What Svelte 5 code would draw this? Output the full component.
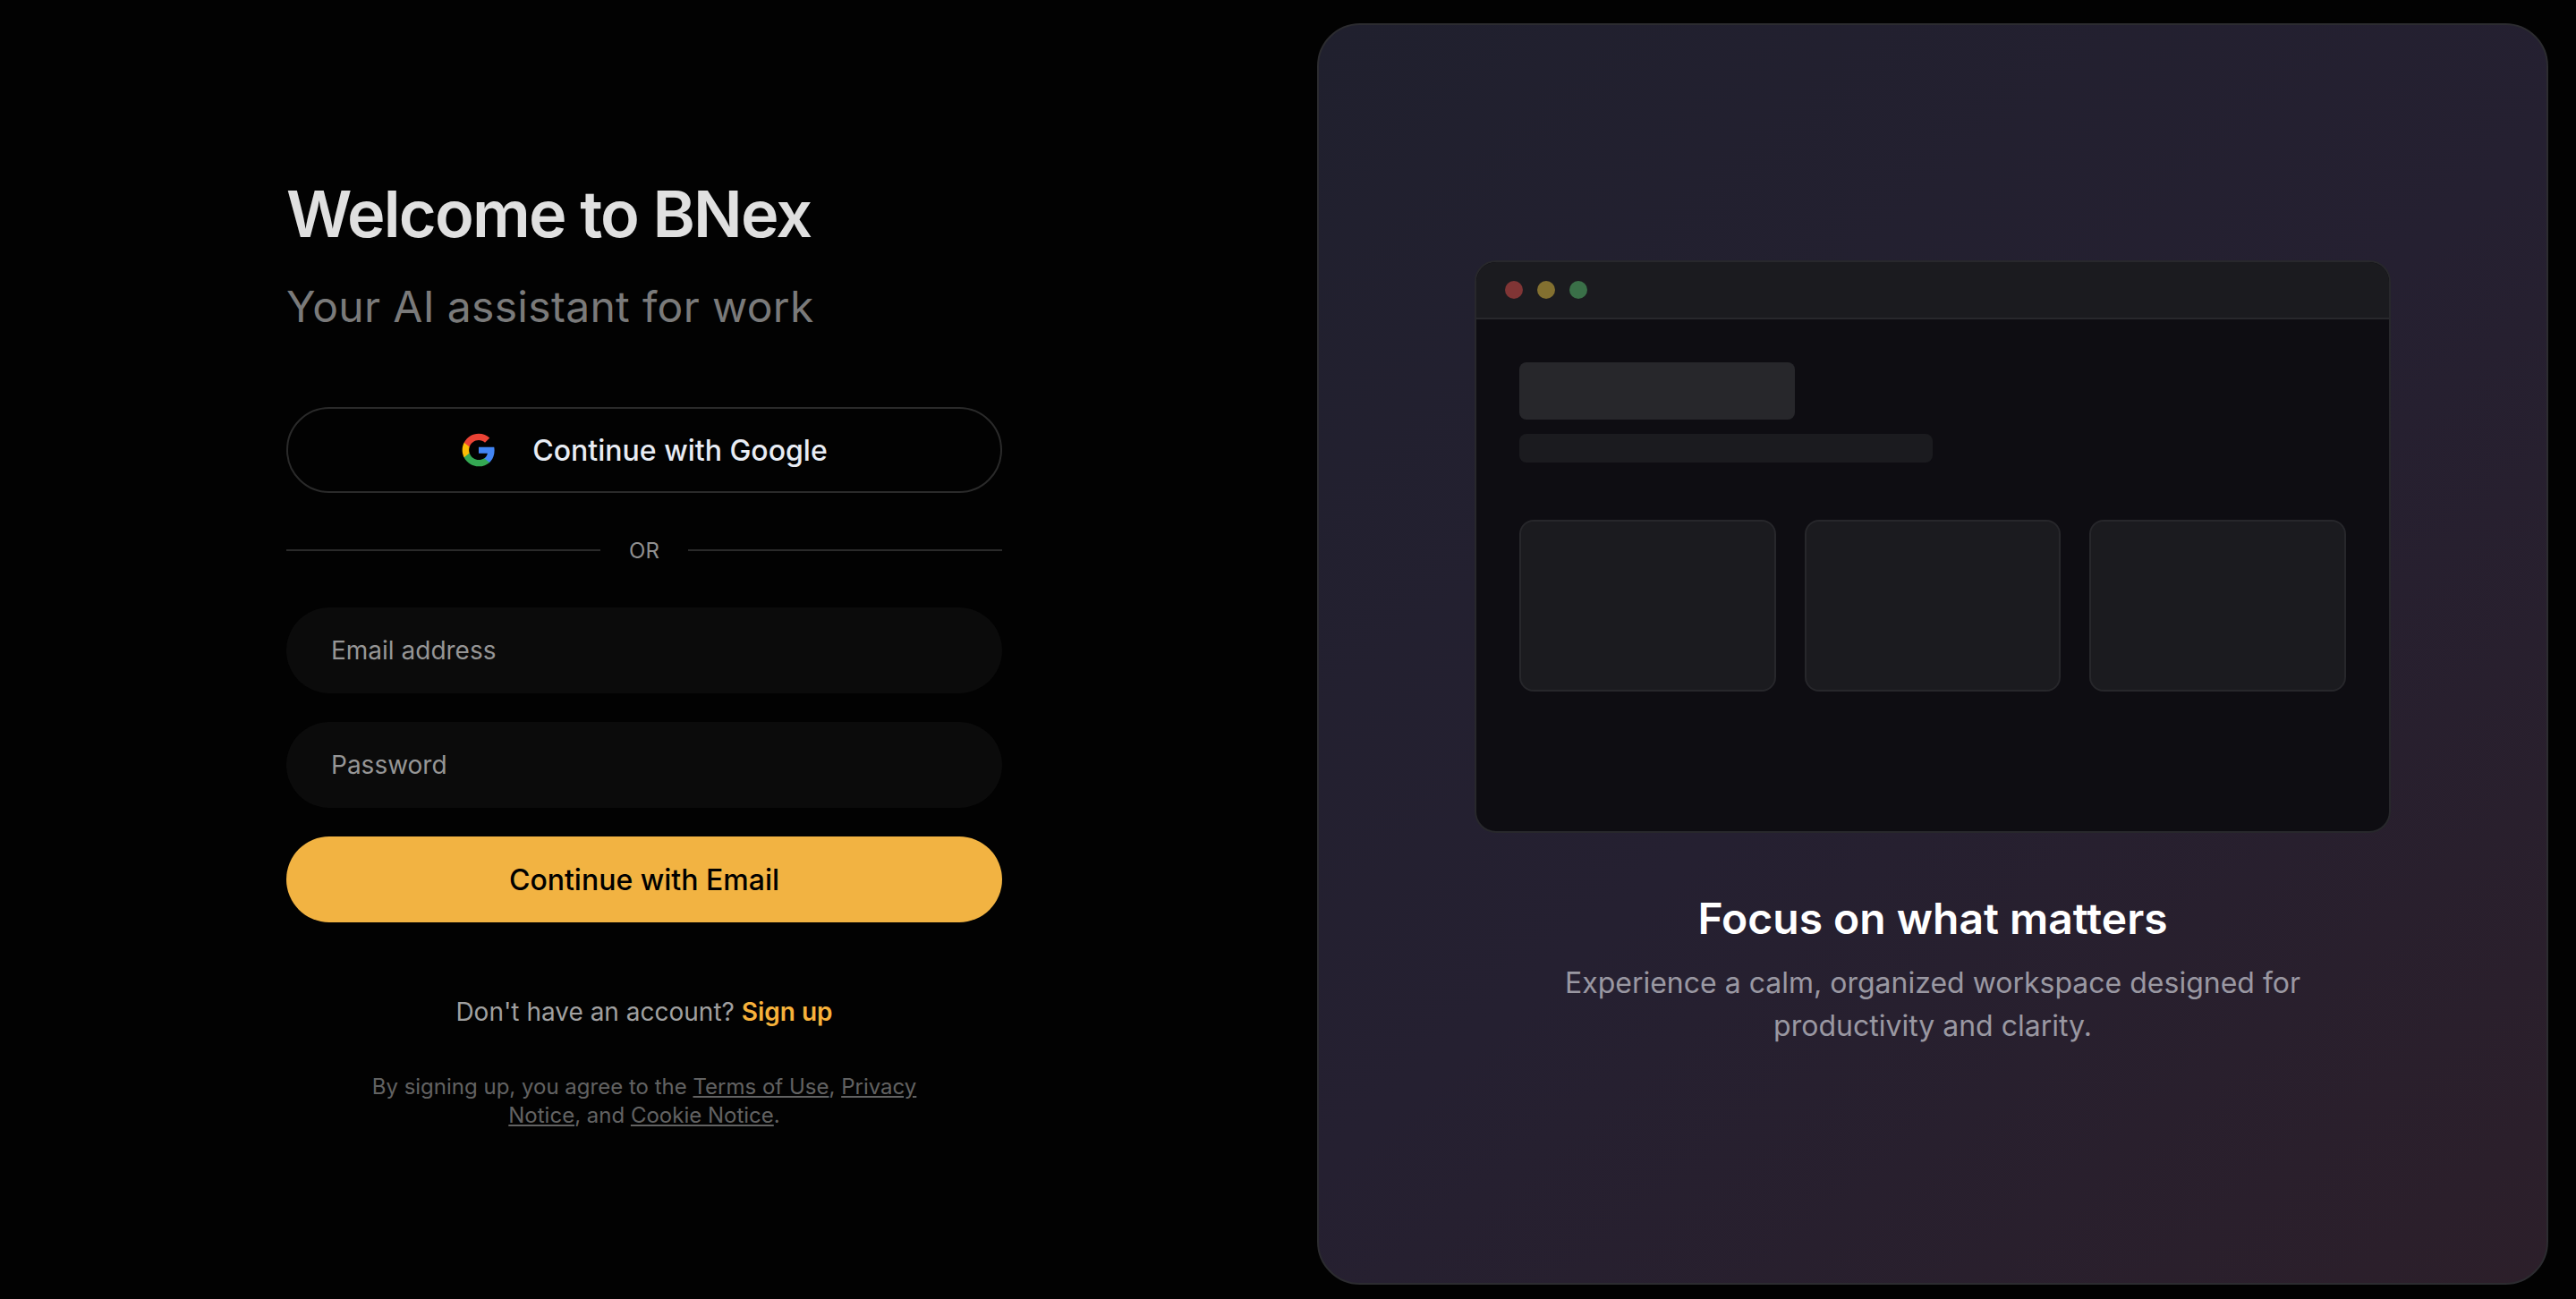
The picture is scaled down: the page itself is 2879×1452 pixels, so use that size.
<script>
  const cards = [1, 2, 3];
</script>

<div class="page">
  <main class="left">
    <div class="form">
      <h1>Welcome to BNex</h1>
      <p class="sub">Your AI assistant for work</p>
      <button class="google">
        <svg viewBox="0 0 24 24" width="40" height="40" aria-hidden="true">
          <path fill="#4285F4" d="M22.56 12.25c0-.78-.07-1.53-.2-2.25H12v4.26h5.92c-.26 1.37-1.04 2.53-2.21 3.31v2.77h3.57c2.08-1.92 3.28-4.74 3.28-8.09z"/>
          <path fill="#34A853" d="M12 23c2.97 0 5.46-.98 7.28-2.66l-3.57-2.77c-.98.66-2.23 1.06-3.71 1.06-2.86 0-5.29-1.93-6.16-4.53H2.18v2.84C3.99 20.53 7.7 23 12 23z"/>
          <path fill="#FBBC05" d="M5.84 14.09c-.22-.66-.35-1.36-.35-2.09s.13-1.43.35-2.09V7.07H2.18C1.43 8.55 1 10.22 1 12s.43 3.45 1.18 4.93l2.85-2.22.81-.62z"/>
          <path fill="#EA4335" d="M12 5.38c1.62 0 3.06.56 4.21 1.64l3.15-3.15C17.45 2.09 14.97 1 12 1 7.7 1 3.99 3.47 2.18 7.07l3.66 2.84c.87-2.6 3.3-4.53 6.16-4.53z"/>
        </svg>
        <span>Continue with Google</span>
      </button>
      <div class="or"><i></i><span>OR</span><i></i></div>
      <div class="field">Email address</div>
      <div class="field">Password</div>
      <button class="primary">Continue with Email</button>
      <p class="signup">Don't have an account? <a href="#signup">Sign up</a></p>
      <p class="legal">By signing up, you agree to the <a href="#terms">Terms of Use</a>, <a href="#privacy">Privacy Notice</a>, and <a href="#cookie">Cookie Notice</a>.</p>
    </div>
  </main>

  <aside class="panel">
    <div class="window">
      <div class="bar">
        <b class="dot red"></b><b class="dot yellow"></b><b class="dot green"></b>
      </div>
      <div class="content">
        <div class="block"></div>
        <div class="line"></div>
        <div class="cards">
          {#each cards as c (c)}
            <div class="card"></div>
          {/each}
        </div>
      </div>
    </div>
    <h2>Focus on what matters</h2>
    <p class="desc">Experience a calm, organized workspace designed for productivity and clarity.</p>
  </aside>
</div>

<style>
  :global(body) {
    margin: 0;
    background: #020202;
    font-family: Inter, "Liberation Sans", sans-serif;
  }
  .page {
    display: flex;
    height: 1452px;
    box-sizing: border-box;
    padding: 26px 31px 16px 0;
    overflow: hidden;
  }
  .left {
    flex: 0 0 1472px;
    box-sizing: border-box;
    padding: 0 352px 0 320px;
  }
  .form {
    display: flex;
    flex-direction: column;
    padding-top: 169px;
  }
  h1 {
    margin: 0;
    font-size: 72px;
    line-height: 88px;
    font-weight: 600;
    letter-spacing: -1.8px;
    color: #e0e0e0;
  }
  .sub {
    margin: 24px 0 0;
    font-size: 48px;
    line-height: 72px;
    letter-spacing: 0.32px;
    color: #7a7a7a;
  }
  button {
    font-family: inherit;
    box-sizing: border-box;
    width: 100%;
    height: 96px;
    border-radius: 48px;
    font-size: 32px;
    font-weight: 500;
    cursor: pointer;
  }
  .google {
    margin-top: 76px;
    display: flex;
    align-items: center;
    justify-content: center;
    gap: 40px;
    background: transparent;
    border: 2px solid #2a2a2a;
    color: #e8ecf4;
  }
  .or {
    display: flex;
    align-items: center;
    gap: 32px;
    margin: 48px 0;
    height: 32px;
    color: #909090;
    font-size: 24px;
  }
  .or i {
    flex: 1;
    height: 2px;
    background: #2a2a2a;
  }
  .field {
    box-sizing: border-box;
    height: 96px;
    border-radius: 48px;
    background: #0b0b0b;
    padding: 0 50px;
    display: flex;
    align-items: center;
    font-size: 28px;
    color: #969696;
    margin-bottom: 32px;
  }
  .primary {
    border: none;
    background: #f2b342;
    color: #000;
  }
  .signup {
    margin: 80px 0 0;
    text-align: center;
    font-size: 28px;
    line-height: 40px;
    color: #a0a0a0;
  }
  .signup a {
    color: #f7b23b;
    font-weight: 600;
    text-decoration: none;
  }
  .legal {
    margin: 48px auto 0;
    width: 640px;
    text-align: center;
    font-size: 24px;
    line-height: 32px;
    color: #626262;
  }
  .legal a {
    color: #626262;
    text-decoration: underline;
  }
  .panel {
    flex: 1;
    box-sizing: border-box;
    border: 2px solid #2c2c30;
    border-radius: 48px;
    background: linear-gradient(140deg, #20202e 0%, #252031 50%, #2c1f2a 100%);
    display: flex;
    flex-direction: column;
    align-items: center;
    padding-top: 263px;
  }
  .window {
    box-sizing: border-box;
    flex: none;
    width: 1024px;
    height: 640px;
    border: 2px solid #28282c;
    border-radius: 24px;
    background: #0e0d12;
    overflow: hidden;
  }
  .bar {
    box-sizing: border-box;
    height: 64px;
    background: #1b1b1f;
    border-bottom: 2px solid #28282c;
    display: flex;
    align-items: center;
    gap: 16px;
    padding: 0 32px;
  }
  .dot {
    width: 20px;
    height: 20px;
    border-radius: 50%;
  }
  .red { background: #803535; }
  .yellow { background: #837030; }
  .green { background: #3a7048; }
  .content {
    padding: 48px;
  }
  .block {
    width: 33.33%;
    height: 64px;
    border-radius: 8px;
    background: #27272b;
  }
  .line {
    width: 50%;
    height: 32px;
    margin-top: 16px;
    border-radius: 8px;
    background: #1b1b1f;
  }
  .cards {
    display: grid;
    grid-template-columns: repeat(3, 1fr);
    gap: 32px;
    margin-top: 64px;
  }
  .card {
    box-sizing: border-box;
    height: 192px;
    border-radius: 16px;
    background: #1b1b1f;
    border: 2px solid #27272b;
  }
  h2 {
    margin: 65px 0 0;
    font-size: 48px;
    line-height: 62px;
    font-weight: 600;
    color: #fff;
  }
  .desc {
    margin: 17px 0 0;
    width: 900px;
    text-align: center;
    font-size: 32px;
    line-height: 48px;
    color: #9a98a2;
  }
</style>
